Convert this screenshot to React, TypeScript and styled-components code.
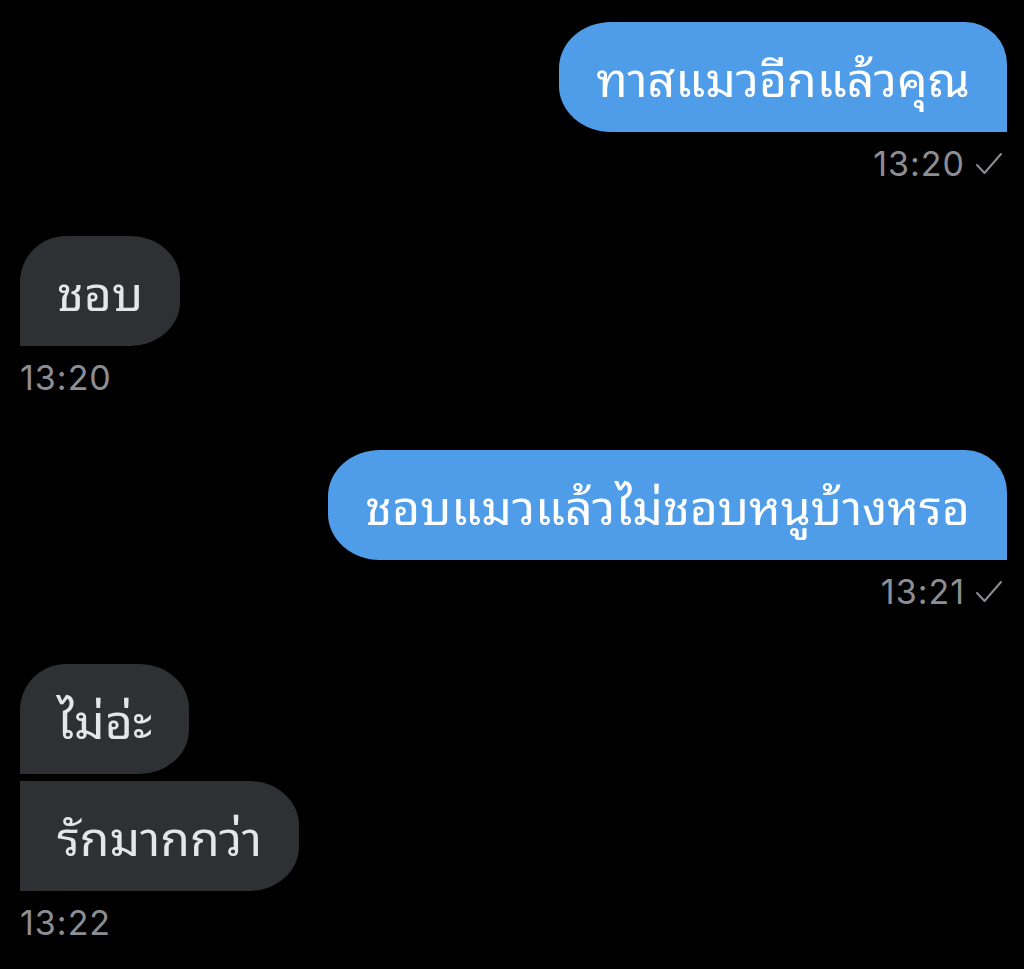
import React from "react";
import styled, { createGlobalStyle } from "styled-components";

const GlobalStyle = createGlobalStyle`
  html, body {
    margin: 0;
    padding: 0;
    background: #000;
  }
  body {
    font-family: "Noto Sans Thai Looped", "Noto Sans Thai", "Loma", "Garuda", "Noto Sans", sans-serif;
  }
`;

const Page = styled.div`
  width: 1024px;
  height: 969px;
  background: #000;
  box-sizing: border-box;
  padding: 22px 17px 0 20px;
  display: flex;
  flex-direction: column;
  gap: 53px;
  overflow: hidden;
`;

const Group = styled.div<{ $out?: boolean }>`
  display: flex;
  flex-direction: column;
  align-items: ${(p) => (p.$out ? "flex-end" : "flex-start")};
  gap: 7px;
`;

const Bubble = styled.div<{ $out?: boolean; $first?: boolean; $last?: boolean }>`
  box-sizing: border-box;
  height: 110px;
  padding: 0 37px 2px 37px;
  display: flex;
  align-items: center;
  font-size: 48.2px;
  line-height: 60px;
  white-space: nowrap;
  color: ${(p) => (p.$out ? "#ffffff" : "#e6e6e8")};
  background: ${(p) => (p.$out ? "#4f9de9" : "#2e3033")};
  border-radius: ${(p) =>
    p.$out
      ? "52px 42px 0 52px / 46px 42px 0 46px"
      : `${p.$first ? "46px" : "0"} 50px 50px 0 / ${p.$first ? "46px" : "0"} 44px 44px 0`};
`;

const Meta = styled.div<{ $out?: boolean }>`
  display: flex;
  align-items: center;
  gap: 10px;
  margin-top: 6px;
  padding-right: ${(p) => (p.$out ? "4px" : "0")};
  font-family: Inter, "Liberation Sans", sans-serif;
  font-size: 34px;
  letter-spacing: 1px;
  line-height: 38px;
  color: #8d8e93;
`;

const Check = () => (
  <svg width="28" height="24" viewBox="0 0 28 24" fill="none">
    <path d="M2 13 L9.5 21 L26 2" stroke="#8d8e93" strokeWidth="2" strokeLinecap="round" strokeLinejoin="round" />
  </svg>
);

export default function App() {
  return (
    <>
      <GlobalStyle />
      <Page>
        <Group $out>
          <Bubble $out>ทาสแมวอีกแล้วคุณ</Bubble>
          <Meta $out>
            13:20 <Check />
          </Meta>
        </Group>
        <Group>
          <Bubble $first $last>ชอบ</Bubble>
          <Meta>13:20</Meta>
        </Group>
        <Group $out>
          <Bubble $out>ชอบแมวแล้วไม่ชอบหนูบ้างหรอ</Bubble>
          <Meta $out>
            13:21 <Check />
          </Meta>
        </Group>
        <Group>
          <Bubble $first>ไม่อ่ะ</Bubble>
          <Bubble $last>รักมากกว่า</Bubble>
          <Meta>13:22</Meta>
        </Group>
      </Page>
    </>
  );
}
